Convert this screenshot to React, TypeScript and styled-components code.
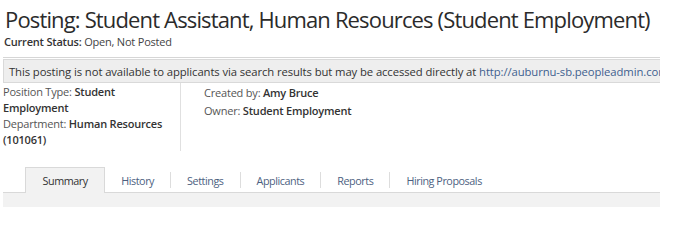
import React from "react";
import styled, { createGlobalStyle } from "styled-components";

const Global = createGlobalStyle`
  html, body { margin: 0; padding: 0; background: #fff; }
  body { font-family: "Open Sans", "Liberation Sans", sans-serif; color: #333; }
`;

const Page = styled.div`
  width: 657px;
  padding: 0 0 0 3px;
  overflow: hidden;
`;

const Title = styled.h1`
  margin: 4px 0 0 2px;
  font-size: 22px;
  font-weight: 400;
  line-height: 30px;
  letter-spacing: -0.85px;
  color: #2b2b2b;
  white-space: nowrap;
`;

const Status = styled.div`
  margin: 0 0 0 1px;
  font-size: 11px;
  line-height: 16px;
  letter-spacing: -0.2px;
  color: #444;
`;

const StatusLabel = styled.span`
  font-weight: 600;
  color: #333;
`;

const Rule = styled.hr`
  margin: 7px 0 0 0;
  border: 0;
  border-top: 1px solid #d6d6d6;
`;

const Notice = styled.div`
  margin-top: 1px;
  height: 22px;
  line-height: 23px;
  background: #eeeeee;
  border: 1px solid #d9d9d9;
  border-right: 0;
  padding-left: 5px;
  font-size: 11.3px;
  letter-spacing: -0.1px;
  color: #333;
  white-space: nowrap;
  overflow: hidden;
`;

const Link = styled.a`
  color: #3f5f8f;
  text-decoration: none;
`;

const Info = styled.div`
  display: flex;
  font-size: 11px;
  line-height: 16px;
  letter-spacing: -0.2px;
`;

const InfoCol = styled.div<{ $divider?: boolean; $width?: number }>`
  width: ${(p) => (p.$width ? `${p.$width}px` : "auto")};
  padding: ${(p) => (p.$divider ? "1px 0 3px 0" : "2px 0 0 23px")};
  border-right: ${(p) => (p.$divider ? "1px solid #e0e0e0" : "0")};
`;

const Field = styled.div<{ $gap?: number }>`
  margin-bottom: ${(p) => p.$gap ?? 0}px;
  color: #555;
`;

const Value = styled.span`
  font-weight: 600;
  color: #333;
`;

const TabBar = styled.div`
  margin-top: 16px;
  padding-left: 22px;
  display: flex;
  align-items: flex-end;
  border-bottom: 1px solid #d9d9d9;
`;

const Tab = styled.div<{ $active?: boolean }>`
  height: 25px;
  line-height: 26px;
  padding: 0 ${(p) => (p.$active ? "16.5px" : "15px")};
  font-size: 10.8px;
  letter-spacing: -0.45px;
  color: ${(p) => (p.$active ? "#333" : "#4d5f7f")};
  background: ${(p) => (p.$active ? "#f2f2f2" : "transparent")};
  border: 1px solid ${(p) => (p.$active ? "#d9d9d9" : "transparent")};
  border-bottom: 0;
  margin-bottom: -1px;
`;

const Sep = styled.span`
  width: 1px;
  height: 16px;
  background: #dddddd;
  align-self: center;
`;

const Panel = styled.div`
  height: 14px;
  background: #f2f2f2;
`;

const tabs = ["History", "Settings", "Applicants", "Reports", "Hiring Proposals"];

export default function App() {
  return (
    <>
      <Global />
      <Page>
        <Title>Posting: Student Assistant, Human Resources (Student Employment)</Title>
        <Status>
          <StatusLabel>Current Status:</StatusLabel> Open, Not Posted
        </Status>
        <Rule />
        <Notice>
          This posting is not available to applicants via search results but may be accessed directly at{" "}
          <Link href="#">http://auburnu-sb.peopleadmin.com/postings/12345</Link>
        </Notice>
        <Info>
          <InfoCol $divider $width={177}>
            <Field>
              Position Type: <Value>Student Employment</Value>
            </Field>
            <Field>
              Department: <Value>Human Resources (101061)</Value>
            </Field>
          </InfoCol>
          <InfoCol>
            <Field $gap={2}>
              Created by: <Value>Amy Bruce</Value>
            </Field>
            <Field>
              Owner: <Value>Student Employment</Value>
            </Field>
          </InfoCol>
        </Info>
        <TabBar>
          <Tab $active>Summary</Tab>
          {tabs.map((t, i) => (
            <React.Fragment key={t}>
              {i > 0 && <Sep />}
              <Tab>{t}</Tab>
            </React.Fragment>
          ))}
        </TabBar>
        <Panel />
      </Page>
    </>
  );
}
